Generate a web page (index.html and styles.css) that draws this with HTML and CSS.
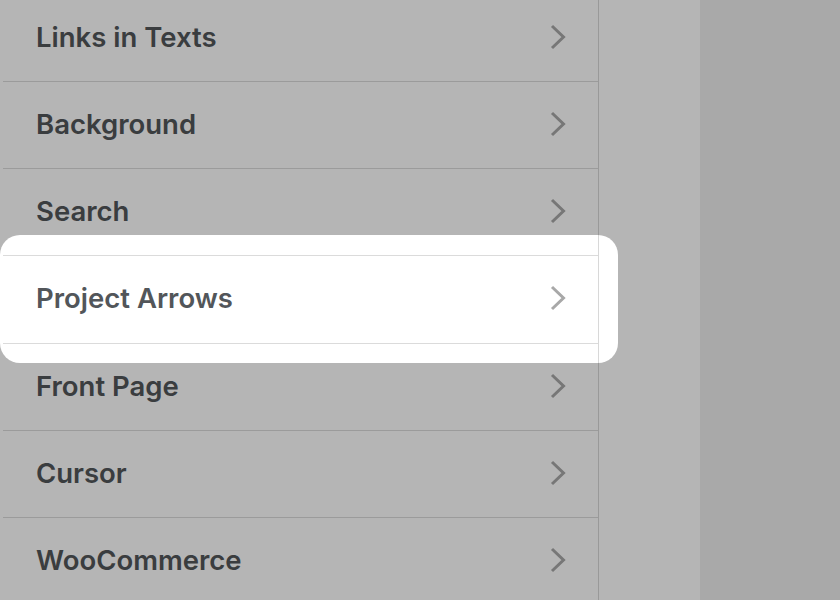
FILE: index.html
```html
<!DOCTYPE html>
<html lang="en">
<head>
    <meta charset="UTF-8">
    <meta name="viewport" content="width=device-width, initial-scale=1.0">
    <title>Settings</title>
    <link rel="stylesheet" href="styles.css">
</head>
<body>
    <div class="page">
        <ul class="menu">
            <li class="menu-item"><span>Links in Texts</span><svg class="chevron" viewBox="0 0 16 26"><path d="M2 2 L13.5 13 L2 24"/></svg></li>
            <li class="menu-item"><span>Background</span><svg class="chevron" viewBox="0 0 16 26"><path d="M2 2 L13.5 13 L2 24"/></svg></li>
            <li class="menu-item"><span>Search</span><svg class="chevron" viewBox="0 0 16 26"><path d="M2 2 L13.5 13 L2 24"/></svg></li>
            <li class="menu-item"><span>Project Arrows</span><svg class="chevron" viewBox="0 0 16 26"><path d="M2 2 L13.5 13 L2 24"/></svg></li>
            <li class="menu-item"><span>Front Page</span><svg class="chevron" viewBox="0 0 16 26"><path d="M2 2 L13.5 13 L2 24"/></svg></li>
            <li class="menu-item"><span>Cursor</span><svg class="chevron" viewBox="0 0 16 26"><path d="M2 2 L13.5 13 L2 24"/></svg></li>
            <li class="menu-item"><span>WooCommerce</span><svg class="chevron" viewBox="0 0 16 26"><path d="M2 2 L13.5 13 L2 24"/></svg></li>
        </ul>
        <div class="gutter"></div>
        <div class="preview"></div>
    </div>
    <div class="spotlight"></div>
</body>
</html>
```

FILE: styles.css
```css
* {
    box-sizing: border-box;
}

html, body {
    margin: 0;
    padding: 0;
    height: 100vh;
    overflow: hidden;
    background-color: #ffffff;
    font-family: 'Inter', 'Helvetica Neue', sans-serif;
}

.page {
    display: flex;
    height: 100vh;
}

.menu {
    list-style: none;
    margin: -5.2px 0 0 0;
    padding: 0 0 0 3px;
    width: 599px;
    border-right: 1px solid #d8d8d8;
    background-color: #ffffff;
}

.menu-item {
    display: flex;
    align-items: center;
    justify-content: space-between;
    height: 87.2px;
    padding: 0 32px 2px 33px;
    border-bottom: 1px solid #dbdbdb;
    font-size: 27.5px;
    font-weight: 600;
    color: #52565a;
}

.chevron {
    width: 16px;
    height: 26px;
    fill: none;
    stroke: #a8a8a8;
    stroke-width: 3;
}

.gutter {
    width: 101px;
    background-color: #ffffff;
}

.preview {
    flex: 1;
    background-color: #efefef;
}

.spotlight {
    position: absolute;
    left: 0;
    top: 235px;
    width: 618px;
    height: 128px;
    border-radius: 20px;
    box-shadow: 0 0 0 1200px rgba(0, 0, 0, 0.29);
    pointer-events: none;
}
```
